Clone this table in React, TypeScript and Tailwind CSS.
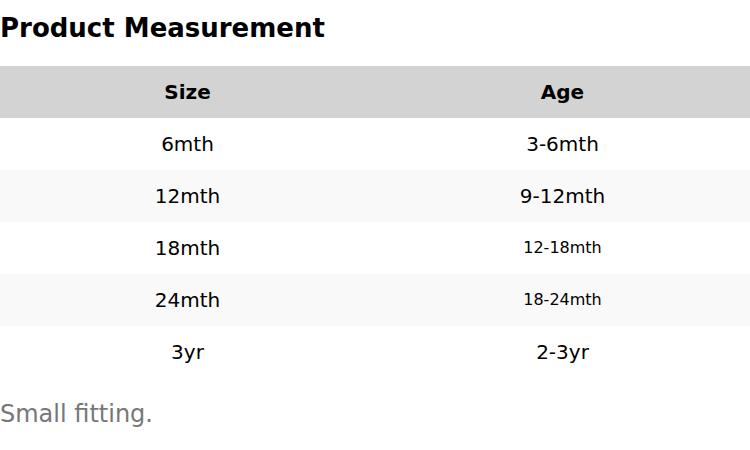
export default function App() {
  const rows: [string, string, boolean][] = [
    ["6mth", "3-6mth", false],
    ["12mth", "9-12mth", false],
    ["18mth", "12-18mth", true],
    ["24mth", "18-24mth", true],
    ["3yr", "2-3yr", false],
  ];
  return (
    <div className="w-[750px] h-[450px] bg-white text-black" style={{ fontFamily: '"DejaVu Sans", sans-serif' }}>
      <h2 className="text-[26px] font-bold leading-[56px] h-[56px]">Product Measurement</h2>
      <table className="w-full border-collapse mt-[10px] table-fixed">
        <thead>
          <tr className="bg-[#d3d3d3] h-[52px]">
            <th className="text-[20px] font-bold">Size</th>
            <th className="text-[20px] font-bold">Age</th>
          </tr>
        </thead>
        <tbody>
          {rows.map(([s, a, small], i) => (
            <tr key={s} className={`h-[52px] ${i % 2 === 1 ? "bg-[#f9f9f9]" : "bg-white"}`}>
              <td className="text-center text-[20px]">{s}</td>
              <td className={`text-center ${small ? "text-[16px]" : "text-[20px]"}`}>{a}</td>
            </tr>
          ))}
        </tbody>
      </table>
      <p className="text-[24px] text-[#777777] mt-[20px] leading-[32px]">Small fitting.</p>
    </div>
  );
}
